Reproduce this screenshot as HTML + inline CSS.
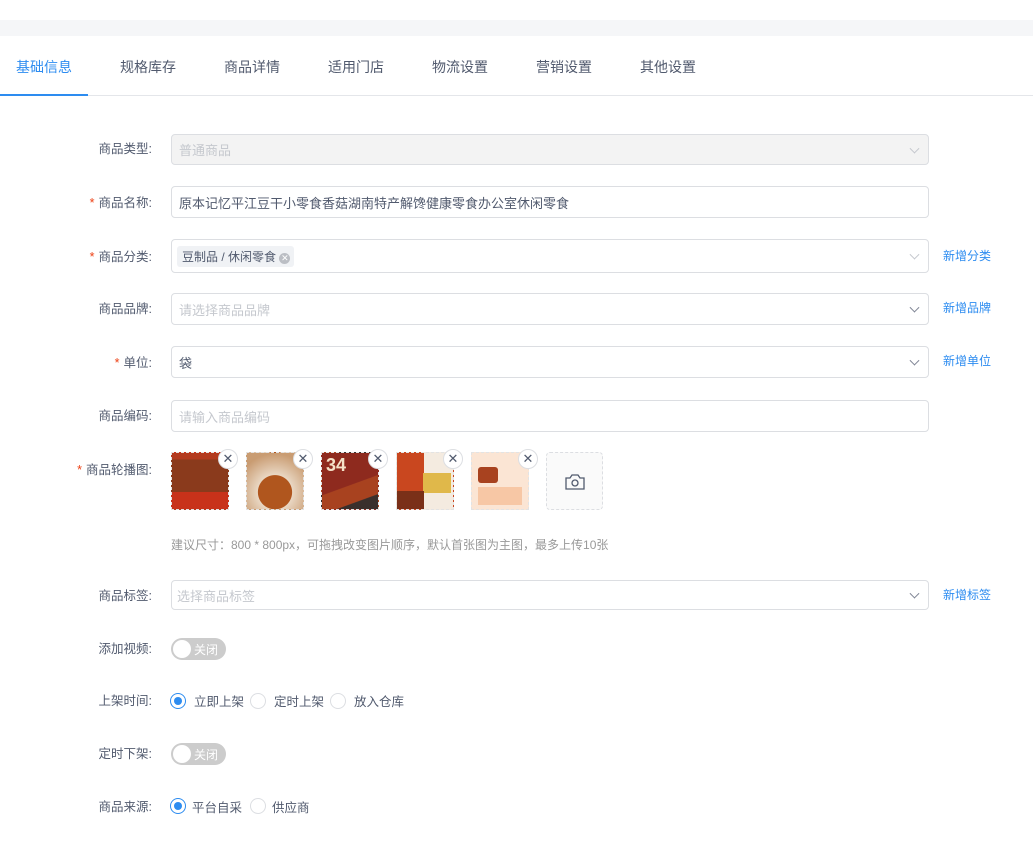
<!DOCTYPE html>
<html><head><meta charset="utf-8"><style>
*{box-sizing:border-box;margin:0;padding:0}
body{width:1033px;height:854px;background:#fff;position:relative;overflow:hidden;font-family:"Liberation Sans","Noto Sans CJK SC",sans-serif;font-size:13px;color:#515a6e}
.a{position:absolute}
.bar{left:0;top:20px;width:1033px;height:16px;background:#f5f6f8}
.tab{top:57px;font-size:14px;color:#515a6e}
.lbl{width:152px;left:0;text-align:right;font-size:12.5px;color:#515a6e;margin-top:-2px}
.lbl i{color:#ed4014;font-style:normal;margin-right:4px}
.inp{left:171px;width:758px;border:1px solid #dcdee2;border-radius:4px;background:#fff;padding-left:7px;display:flex;align-items:center;font-size:13px;color:#515a6e}
.ph{color:#c5c8ce}
.chev{position:absolute;right:10px;top:50%;width:7px;height:7px;border-right:1.5px solid #808695;border-bottom:1.5px solid #808695;transform:translateY(-70%) rotate(45deg)}
.link{left:943px;color:#2d8cf0;font-size:12px;margin-top:-1px}
.img{top:452px;width:58px;height:58px;border:1px dashed #e3e3e3}
.x{width:20px;height:20px;border-radius:50%;background:#fff;border:1px solid #dcdee2;color:#515a6e;font-size:13px;text-align:center;line-height:17px}
.tg{left:171px;width:55px;height:22px;border-radius:11px;background:#ccc}
.tg:before{content:"";position:absolute;left:2px;top:2px;width:18px;height:18px;border-radius:50%;background:#fff}
.tg span{position:absolute;left:23px;top:3px;font-size:12px;color:#fff}
.r{width:16px;height:16px;border-radius:50%;border:1px solid #dcdee2;background:#fff}
.r.on{border-color:#2d8cf0}
.r.on:after{content:"";position:absolute;left:3px;top:3px;width:8px;height:8px;border-radius:50%;background:#2d8cf0}
.t{margin-top:-2px;font-size:12.5px}
</style></head><body>
<div class="a bar"></div>
<div class="a tab" style="left:16px;color:#2d8cf0">基础信息</div>
<div class="a tab" style="left:120px">规格库存</div>
<div class="a tab" style="left:224px">商品详情</div>
<div class="a tab" style="left:328px">适用门店</div>
<div class="a tab" style="left:432px">物流设置</div>
<div class="a tab" style="left:536px">营销设置</div>
<div class="a tab" style="left:640px">其他设置</div>
<div class="a" style="left:0;top:95px;width:1033px;height:1px;background:#e4e6ea"></div>
<div class="a" style="left:0;top:94px;width:88px;height:2px;background:#2d8cf0"></div>

<div class="a lbl" style="top:140px">商品类型:</div>
<div class="a inp" style="top:134px;height:31px;background:#f3f3f3"><span class="ph">普通商品</span><b class="chev" style="border-color:#c5c8ce"></b></div>

<div class="a lbl" style="top:194px"><i>*</i>商品名称:</div>
<div class="a inp" style="top:186px;height:32px">原本记忆平江豆干小零食香菇湖南特产解馋健康零食办公室休闲零食</div>

<div class="a lbl" style="top:248px"><i>*</i>商品分类:</div>
<div class="a inp" style="top:239px;height:34px;padding-left:5px"><span style="background:#f0f2f5;border-radius:3px;padding:2px 4px 2px 5px;font-size:12px;color:#515a6e">豆制品 / 休闲零食 <span style="display:inline-block;width:11px;height:11px;border-radius:50%;background:#bbbec4;color:#fff;font-size:9px;line-height:11px;text-align:center;vertical-align:0px">✕</span></span><b class="chev" style="border-color:#c5c8ce"></b></div>
<div class="a link" style="top:248px">新增分类</div>

<div class="a lbl" style="top:300px">商品品牌:</div>
<div class="a inp" style="top:293px;height:32px"><span class="ph">请选择商品品牌</span><b class="chev"></b></div>
<div class="a link" style="top:300px">新增品牌</div>

<div class="a lbl" style="top:354px"><i>*</i>单位:</div>
<div class="a inp" style="top:346px;height:32px">袋<b class="chev"></b></div>
<div class="a link" style="top:353px">新增单位</div>

<div class="a lbl" style="top:407px">商品编码:</div>
<div class="a inp" style="top:400px;height:32px"><span class="ph">请输入商品编码</span></div>

<div class="a lbl" style="top:461px"><i>*</i>商品轮播图:</div>
<div class="a img" style="left:171px;background:linear-gradient(#b33a1e 0 12%,#8a3a1c 12% 70%,#c8321a 70%)"></div>
<div class="a img" style="left:246px;background:radial-gradient(circle at 50% 70%,#b0561e 0 35%,#e9d7c3 36%,#c99c72 80%)"></div>
<div class="a img" style="left:321px;background:linear-gradient(160deg,#8e2a1e 0 55%,#a8421f 56% 80%,#3a2f2c 81%)"><span style="position:absolute;left:4px;top:2px;color:#f5e2c8;font-size:18px;font-weight:bold">34</span></div>
<div class="a img" style="left:396px;background:linear-gradient(90deg,#c9471f 0 48%,#f4ebe0 48%)"><div style="position:absolute;right:2px;top:20px;width:28px;height:20px;background:#e0b84a"></div><div style="position:absolute;left:0;bottom:0;width:27px;height:18px;background:#7a3018"></div></div>
<div class="a img" style="left:471px;background:#fbe5d4"><div style="position:absolute;left:6px;top:14px;width:20px;height:16px;background:#a8421f;border-radius:3px"></div><div style="position:absolute;left:6px;top:34px;width:44px;height:18px;background:#f7c7a5"></div></div>
<div class="a x" style="left:218px;top:449px">✕</div>
<div class="a x" style="left:293px;top:449px">✕</div>
<div class="a x" style="left:368px;top:449px">✕</div>
<div class="a x" style="left:443px;top:449px">✕</div>
<div class="a x" style="left:518px;top:449px">✕</div>
<div class="a" style="left:546px;top:452px;width:57px;height:58px;border:1px dashed #dcdee2;border-radius:4px;background:#fafafa">
<svg width="20" height="16" viewBox="0 0 20 16" style="position:absolute;left:18px;top:21px" fill="none" stroke="#515a6e" stroke-width="1.3"><path d="M1 4h4l2-3h6l2 3h4v11H1z"/><circle cx="10" cy="9" r="3"/></svg></div>
<div class="a" style="left:171px;top:536px;font-size:12px;color:#999">建议尺寸：800 * 800px，可拖拽改变图片顺序，默认首张图为主图，最多上传10张</div>

<div class="a lbl" style="top:587px">商品标签:</div>
<div class="a inp" style="top:580px;height:30px;padding-left:5px"><span class="ph">选择商品标签</span><b class="chev"></b></div>
<div class="a link" style="top:587px">新增标签</div>

<div class="a lbl" style="top:640px">添加视频:</div>
<div class="a tg" style="top:638px"><span>关闭</span></div>

<div class="a lbl" style="top:692px">上架时间:</div>
<div class="a r on" style="left:170px;top:693px"></div><div class="a t" style="left:194px;top:693px">立即上架</div>
<div class="a r" style="left:250px;top:693px"></div><div class="a t" style="left:274px;top:693px">定时上架</div>
<div class="a r" style="left:330px;top:693px"></div><div class="a t" style="left:354px;top:693px">放入仓库</div>

<div class="a lbl" style="top:745px">定时下架:</div>
<div class="a tg" style="top:743px"><span>关闭</span></div>

<div class="a lbl" style="top:798px">商品来源:</div>
<div class="a r on" style="left:170px;top:798px"></div><div class="a t" style="left:192px;top:799px">平台自采</div>
<div class="a r" style="left:250px;top:798px"></div><div class="a t" style="left:272px;top:799px">供应商</div>
</body></html>
